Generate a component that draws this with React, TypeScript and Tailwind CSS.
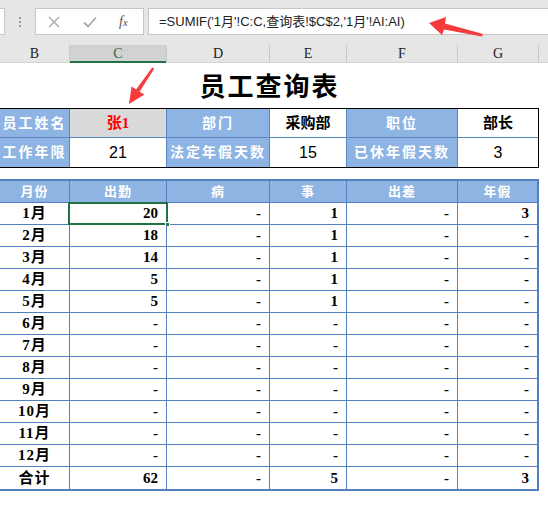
import React from 'react'

const serif = { fontFamily: '"Liberation Serif","Noto Sans CJK SC",serif' }
const sans = { fontFamily: '"Liberation Sans","Noto Sans CJK SC",sans-serif' }

const cols = [
  { key: 'B', w: 'w-[70px]' },
  { key: 'C', w: 'w-[97px]' },
  { key: 'D', w: 'w-[103px]' },
  { key: 'E', w: 'w-[77px]' },
  { key: 'F', w: 'w-[111px]' },
  { key: 'G', w: 'w-[81px]' },
]

const months = [
  ['1月', '20', '-', '1', '-', '3'],
  ['2月', '18', '-', '1', '-', '-'],
  ['3月', '14', '-', '1', '-', '-'],
  ['4月', '5', '-', '1', '-', '-'],
  ['5月', '5', '-', '1', '-', '-'],
  ['6月', '-', '-', '-', '-', '-'],
  ['7月', '-', '-', '-', '-', '-'],
  ['8月', '-', '-', '-', '-', '-'],
  ['9月', '-', '-', '-', '-', '-'],
  ['10月', '-', '-', '-', '-', '-'],
  ['11月', '-', '-', '-', '-', '-'],
  ['12月', '-', '-', '-', '-', '-'],
  ['合计', '62', '-', '5', '-', '3'],
]

const headers = ['月份', '出勤', '病', '事', '出差', '年假']

function FormulaBar() {
  return (
    <div className="h-[45px] bg-[#e6e6e6] flex items-start pt-[8px]">
      <div className="w-[5px] h-[27px] bg-white border-r border-y border-[#c6c6c6]" />
      <div className="w-[30px] h-[27px] flex flex-col items-center justify-center gap-[2px]">
        <span className="w-[2px] h-[2px] bg-[#9a9a9a]" />
        <span className="w-[2px] h-[2px] bg-[#9a9a9a]" />
        <span className="w-[2px] h-[2px] bg-[#9a9a9a]" />
      </div>
      <div className="w-[109px] h-[27px] bg-white border border-[#c6c6c6] flex items-center">
        <svg width="12" height="12" viewBox="0 0 12 12" className="ml-[12px]">
          <path d="M1 1 L11 11 M11 1 L1 11" stroke="#a8a8a8" strokeWidth="1.4" fill="none" />
        </svg>
        <svg width="14" height="12" viewBox="0 0 14 12" className="ml-[23px]">
          <path d="M1 6.5 L5 10.5 L13 1.5" stroke="#a8a8a8" strokeWidth="1.8" fill="none" />
        </svg>
        <span className="ml-[22px] text-[14px] italic text-[#555]" style={serif}>
          f<span className="text-[11px]">x</span>
        </span>
      </div>
      <div className="ml-[4px] flex-1 h-[27px] bg-white border-y border-l border-[#c6c6c6] flex items-center pl-[10px] text-[13px] text-[#222]" style={sans}>
        =SUMIF('1月'!C:C,查询表!$C$2,'1月'!AI:AI)
      </div>
    </div>
  )
}

function ColumnHeader() {
  return (
    <div className="h-[18px] bg-[#e6e6e6] flex border-b border-[#d4d4d4]">
      {cols.map((c) => (
        <div
          key={c.key}
          className={`${c.w} relative flex items-center justify-center border-r border-[#c8c8c8] text-[14px] leading-none ${
            c.key === 'C' ? 'bg-[#d2d2d2] text-[#1f6b40]' : 'text-[#222]'
          }`}
          style={serif}
        >
          {c.key}
          {c.key === 'C' && <div className="absolute left-0 right-0 bottom-[-1px] h-[2px] bg-[#217346]" />}
        </div>
      ))}
      <div className="flex-1" />
    </div>
  )
}

function InfoTable() {
  const label = 'bg-[#8db4e2] text-white font-bold text-[14px] tracking-[2px]'
  const rows = [
    [
      { t: '员工姓名', cls: label },
      { t: '张1', cls: 'bg-[#d9d9d9] text-[#ff0000] font-bold text-[15px]' },
      { t: '部门', cls: label },
      { t: '采购部', cls: 'bg-white text-black font-bold text-[15px]' },
      { t: '职位', cls: label },
      { t: '部长', cls: 'bg-white text-black font-bold text-[15px]' },
    ],
    [
      { t: '工作年限', cls: label },
      { t: '21', cls: 'bg-white text-black text-[16px]', num: true },
      { t: '法定年假天数', cls: label },
      { t: '15', cls: 'bg-white text-black text-[16px]', num: true },
      { t: '已休年假天数', cls: label },
      { t: '3', cls: 'bg-white text-black text-[16px]', num: true },
    ],
  ]
  return (
    <div className="w-[539px] border-y border-r border-black">
      {rows.map((r, i) => (
        <div key={i} className={`flex h-[29px] ${i === 0 ? 'border-b border-[#5a86c0]' : 'h-[28px]'}`}>
          {r.map((c, j) => (
            <div
              key={j}
              className={`${cols[j].w} ${j < 5 ? 'border-r border-[#5a86c0]' : 'flex-1'} ${c.cls} flex items-center justify-center whitespace-nowrap`}
              style={c.num ? sans : serif}
            >
              {c.t}
            </div>
          ))}
        </div>
      ))}
    </div>
  )
}

function MonthTable() {
  return (
    <div className="w-[539px] border-t-2 border-r-2 border-b-2 border-[#5480c0]">
      <div className="flex h-[22px] bg-[#8db4e2] border-b border-[#5480c0]">
        {headers.map((h, j) => (
          <div
            key={h}
            className={`${cols[j].w} ${j < 5 ? 'border-r border-[#5480c0]' : 'flex-1'} flex items-center justify-center text-white font-bold text-[13px] tracking-[1px]`}
            style={serif}
          >
            {h}
          </div>
        ))}
      </div>
      {months.map((r, i) => (
        <div key={r[0]} className={`flex h-[22px] ${i < months.length - 1 ? 'border-b border-[#5480c0]' : 'h-[21px]'}`}>
          {r.map((v, j) => (
            <div
              key={j}
              className={`${cols[j].w} ${j < 5 ? 'border-r border-[#5480c0]' : 'flex-1'} relative flex items-center ${
                j === 0 ? 'justify-center tracking-[1px]' : 'justify-end pr-[8px]'
              } font-bold text-[15px] text-black`}
              style={serif}
            >
              {v}
              {i === 0 && j === 1 && (
                <div className="absolute left-[-2px] top-[-1px] right-[-2px] bottom-[-1px] border-2 border-[#217346]">
                  <div className="absolute right-[-4px] bottom-[-4px] w-[5px] h-[5px] bg-[#217346] border border-white" />
                </div>
              )}
            </div>
          ))}
        </div>
      ))}
    </div>
  )
}

export default function App() {
  return (
    <div className="relative w-[548px] h-[506px] bg-white overflow-hidden">
      <FormulaBar />
      <ColumnHeader />
      <div className="w-[539px] h-[45px] flex items-center justify-center pt-[4px]">
        <span className="text-[26px] font-bold tracking-[2px] text-black" style={serif}>
          员工查询表
        </span>
      </div>
      <InfoTable />
      <div className="h-[11px]" />
      <MonthTable />

      {/* red arrows drawn on top of the sheet */}
      <svg className="absolute left-0 top-0 pointer-events-none" width="548" height="506">
        <polygon
          points="429,23 446,17 445,23.5 483,34 482,36.5 444,29.5 442,35"
          fill="#f53b3b"
        />
        <polygon
          points="129,104 131.6,86.6 136.1,89.6 152.2,67.4 154.2,68.8 139.5,91.8 144.5,94.6"
          fill="#f53b3b"
        />
      </svg>
    </div>
  )
}
